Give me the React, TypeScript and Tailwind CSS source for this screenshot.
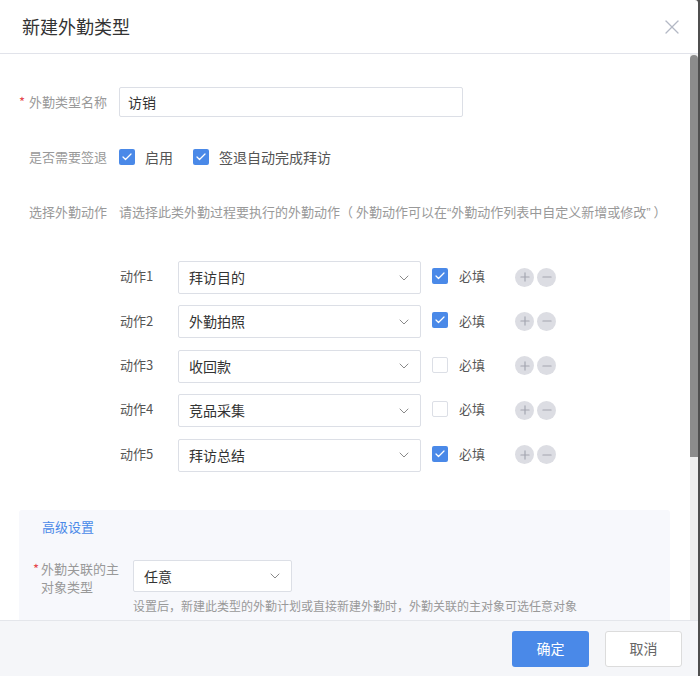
import { Check, ChevronDown, Minus, Plus, X } from "lucide-react";

const font = { fontFamily: '"Noto Sans CJK SC", "Noto Sans", sans-serif' };
const latin = { fontFamily: '"Liberation Sans", sans-serif' };

const actions = [
  { name: "拜访目的", required: true },
  { name: "外勤拍照", required: true },
  { name: "收回款", required: false },
  { name: "竞品采集", required: false },
  { name: "拜访总结", required: true },
];

const Box = ({ checked }: { checked: boolean }) =>
  checked ? (
    <span className="flex h-[16px] w-[16px] items-center justify-center rounded-[2px] bg-[#4a89e8]">
      <Check className="h-[12px] w-[12px] text-white" strokeWidth={2.5} />
    </span>
  ) : (
    <span className="h-[16px] w-[16px] rounded-[2px] border border-[#dcdfe6] bg-white" />
  );

const Select = ({ value, width }: { value: string; width: string }) => (
  <div
    className={`flex h-full items-center justify-between rounded-[2px] border border-[#dcdfe6] bg-white pl-[10px] pr-[8px] ${width}`}
  >
    <span className="text-[14px] text-[#333]">{value}</span>
    <ChevronDown className="h-[16px] w-[16px] text-[#8a8a8a]" strokeWidth={1.5} />
  </div>
);

const CircleBtn = ({ children }: { children: React.ReactNode }) => (
  <span className="flex h-[19px] w-[19px] items-center justify-center rounded-full bg-[#dcdde3] text-[#a3a5b0]">
    {children}
  </span>
);

export default function App() {
  return (
    <div className="h-[676px] w-[700px] overflow-hidden bg-[#4f4f4f]" style={font}>
      <div className="flex h-full w-[698px] flex-col overflow-hidden rounded-tr-[3px] bg-white">
        <div className="flex h-[54px] shrink-0 items-center justify-between border-b border-[#e1e3ea] pl-[22px] pr-[14px]">
          <h2 className="text-[18px] text-[#333]">新建外勤类型</h2>
          <X className="h-[24px] w-[24px] text-[#b3b8c5]" strokeWidth={1.3} />
        </div>

        <div className="flex h-[566px] shrink-0 overflow-hidden">
          <div className="flex-1 text-[13px]">
            <div className="mt-[33px] flex h-[30px] items-center">
              <div className="w-[107px] text-right text-[#999]">
                <span className="mr-[4px] text-[#e5484d]">*</span>外勤类型名称
              </div>
              <div className="ml-[12px] flex h-full w-[344px] items-center rounded-[2px] border border-[#dcdfe6] px-[8px] text-[14px] text-[#333]">
                访销
              </div>
            </div>

            <div className="mt-[32px] flex h-[16px] items-center">
              <div className="w-[107px] text-right text-[#999]">是否需要签退</div>
              <div className="ml-[12px] flex items-center">
                <Box checked />
                <span className="ml-[10px] text-[14px] text-[#555]">启用</span>
                <span className="ml-[20px]">
                  <Box checked />
                </span>
                <span className="ml-[10px] text-[14px] text-[#555]">签退自动完成拜访</span>
              </div>
            </div>

            <div className="mt-[38px] flex h-[18px] items-center whitespace-nowrap leading-[18px]">
              <div className="w-[107px] text-right text-[#999]">选择外勤动作</div>
              <div className="ml-[12px] text-[#999]">
                请选择此类外勤过程要执行的外勤动作（ 外勤动作可以在<span style={latin}>“</span>
                外勤动作列表中自定义新增或修改<span style={latin}>”</span> ）
              </div>
            </div>

            <div className="mt-[40px] flex flex-col gap-[11.4px] pl-[120px]">
              {actions.map((a, i) => (
                <div key={a.name} className="flex h-[33px] items-center">
                  <span className="-mt-[3px] w-[58px] text-[13px] text-[#555]">动作{i + 1}</span>
                  <Select value={a.name} width="w-[243px]" />
                  <span className="ml-[11px] -mt-[3px] flex items-center">
                    <Box checked={a.required} />
                    <span className="ml-[11px] text-[13px] text-[#555]">必填</span>
                  </span>
                  <span className="ml-[30px] -mt-[1px] flex gap-[3px]">
                    <CircleBtn>
                      <Plus className="h-[14px] w-[14px]" strokeWidth={2} />
                    </CircleBtn>
                    <CircleBtn>
                      <Minus className="h-[14px] w-[14px]" strokeWidth={2} />
                    </CircleBtn>
                  </span>
                </div>
              ))}
            </div>

            <div className="ml-[19px] mr-[20px] mt-[38.5px] rounded-[3px] bg-[#f7f8fc] pb-[20px] pt-[8px]">
              <div className="pl-[23px] text-[13px] leading-[18px] text-[#4a89e8]">高级设置</div>
              <div className="mt-[24px] flex items-start pl-[14px]">
                <div className="flex w-[89px] text-[13px] leading-[18px] text-[#999]">
                  <span className="mr-[2px] text-[#e5484d]">*</span>
                  <span>外勤关联的主对象类型</span>
                </div>
                <div className="ml-[11px]">
                  <div className="h-[32px]">
                    <Select value="任意" width="w-[159px]" />
                  </div>
                  <div className="mt-[5px] whitespace-nowrap text-[12px] leading-[18px] text-[#999]">
                    设置后，新建此类型的外勤计划或直接新建外勤时，外勤关联的主对象可选任意对象
                  </div>
                </div>
              </div>
            </div>
          </div>

          <div className="w-[8px] shrink-0 bg-[#efefef]">
            <div className="mt-[1px] h-[402px] rounded-t-[4px] bg-[#8c8c8c]" />
          </div>
        </div>

        <div className="flex flex-1 items-center justify-end gap-[16px] border-t border-[#e4e6eb] bg-[#f5f6f9] pr-[16px]">
          <button className="h-[36px] w-[77px] rounded-[3px] bg-[#4a89e8] text-[14px] text-white">确定</button>
          <button className="h-[36px] w-[77px] rounded-[3px] border border-[#dcdcdc] bg-white text-[14px] text-[#666]">
            取消
          </button>
        </div>
      </div>
    </div>
  );
}
